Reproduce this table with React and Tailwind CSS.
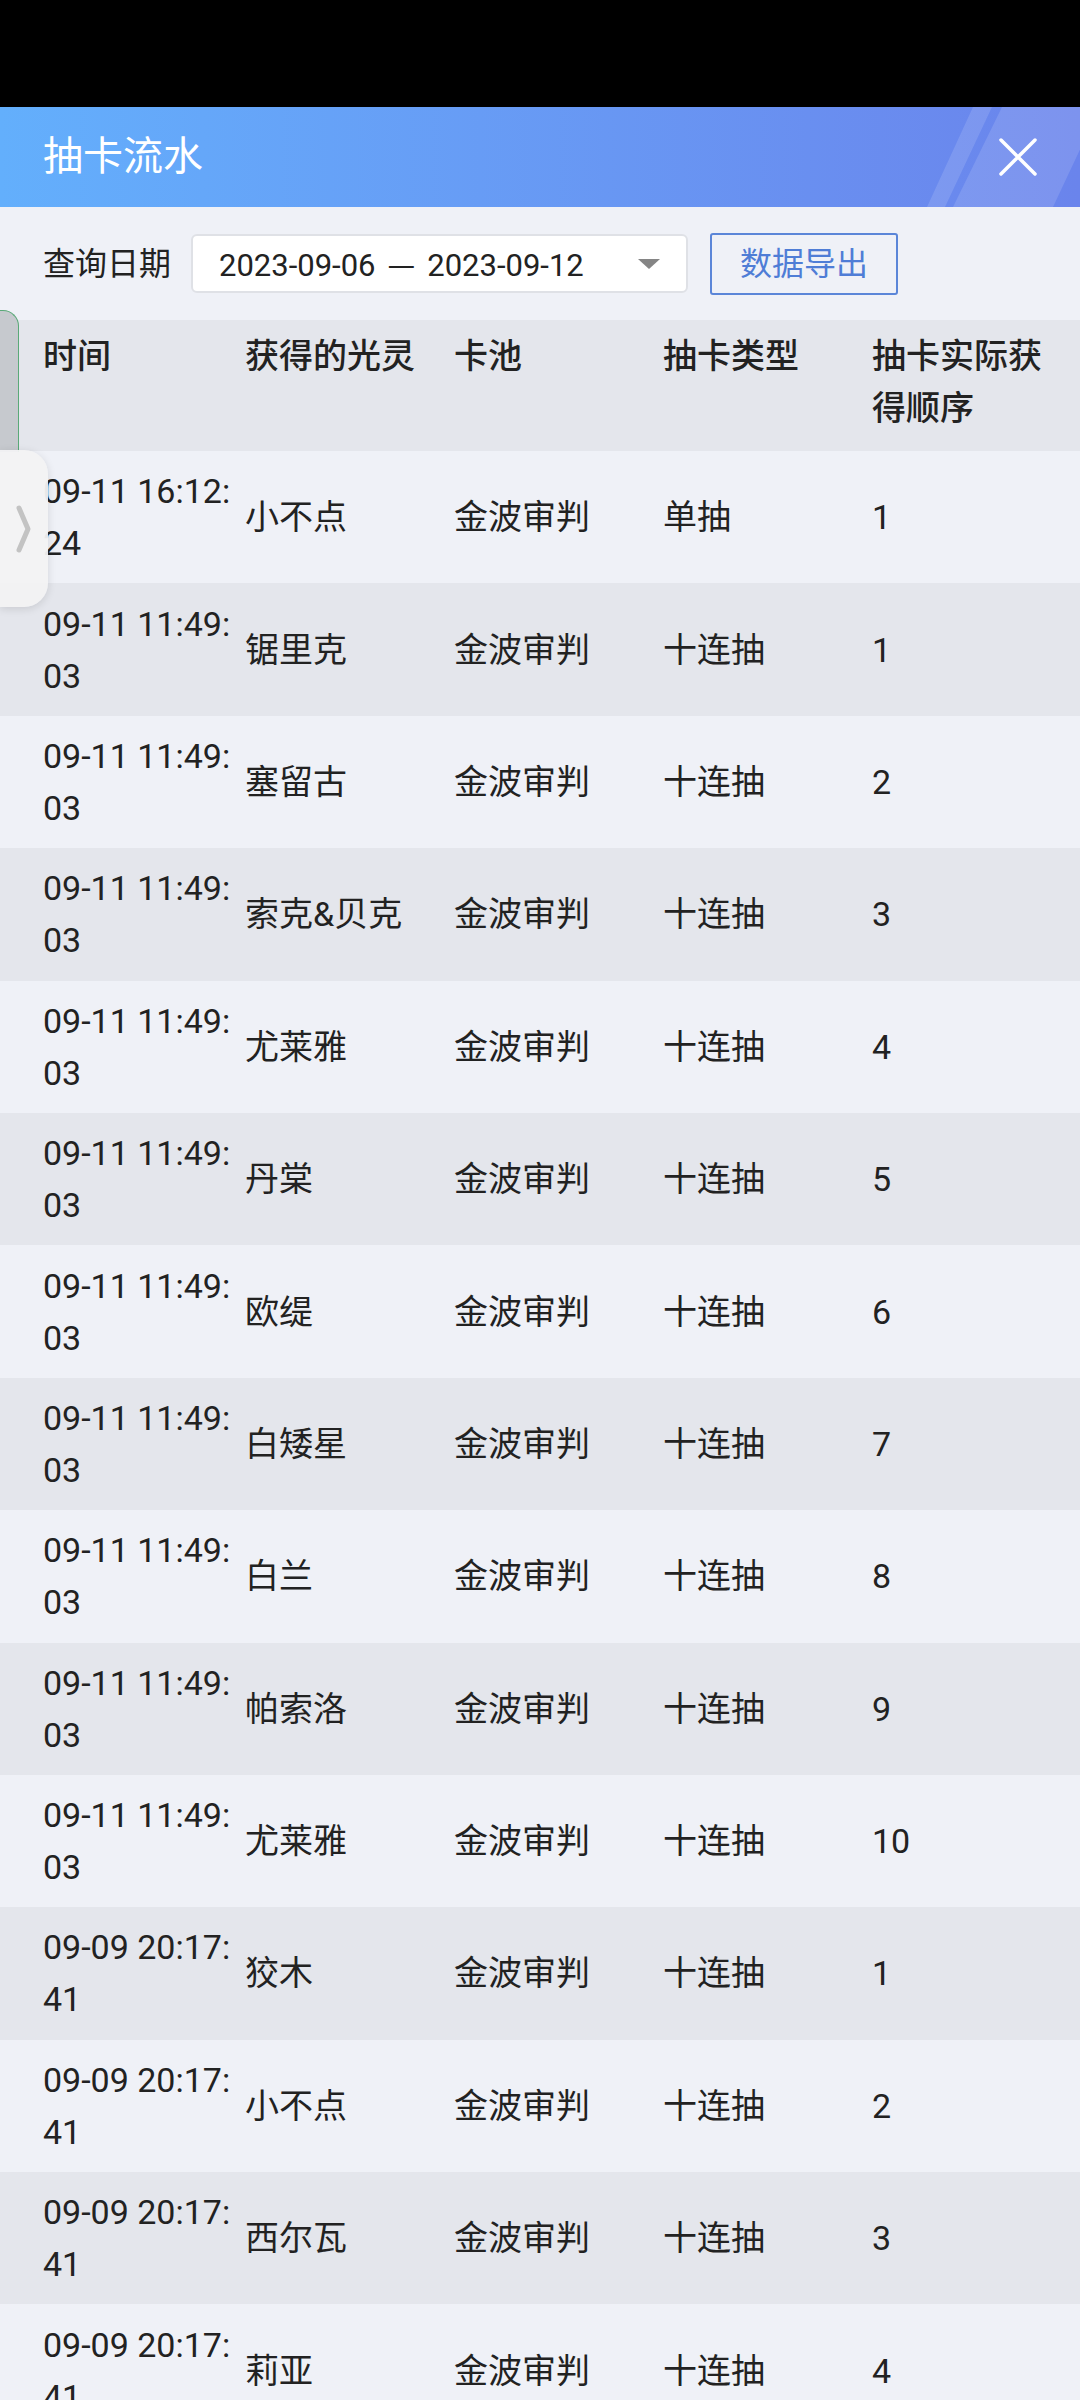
const rows = [
  ['09-11 16:12:', '24', '小不点', '金波审判', '单抽', '1'],
  ['09-11 11:49:', '03', '锯里克', '金波审判', '十连抽', '1'],
  ['09-11 11:49:', '03', '塞留古', '金波审判', '十连抽', '2'],
  ['09-11 11:49:', '03', '索克&贝克', '金波审判', '十连抽', '3'],
  ['09-11 11:49:', '03', '尤莱雅', '金波审判', '十连抽', '4'],
  ['09-11 11:49:', '03', '丹棠', '金波审判', '十连抽', '5'],
  ['09-11 11:49:', '03', '欧缇', '金波审判', '十连抽', '6'],
  ['09-11 11:49:', '03', '白矮星', '金波审判', '十连抽', '7'],
  ['09-11 11:49:', '03', '白兰', '金波审判', '十连抽', '8'],
  ['09-11 11:49:', '03', '帕索洛', '金波审判', '十连抽', '9'],
  ['09-11 11:49:', '03', '尤莱雅', '金波审判', '十连抽', '10'],
  ['09-09 20:17:', '41', '狡木', '金波审判', '十连抽', '1'],
  ['09-09 20:17:', '41', '小不点', '金波审判', '十连抽', '2'],
  ['09-09 20:17:', '41', '西尔瓦', '金波审判', '十连抽', '3'],
  ['09-09 20:17:', '41', '莉亚', '金波审判', '十连抽', '4'],
]

const font = { fontFamily: 'Roboto, "Noto Sans CJK SC", sans-serif' }

export default function App() {
  return (
    <div className="w-[1080px] h-[2400px] overflow-hidden bg-[#eff1f7] relative text-[#222]" style={font}>
      <div className="h-[107px] bg-black" />

      {/* title bar */}
      <div className="relative h-[100px] bg-linear-to-r from-[#63affc] to-[#6a84ec] flex items-center pl-[43px] overflow-hidden">
        <span className="text-[40px] text-white leading-none">抽卡流水</span>
        <svg className="absolute right-0 top-0 h-full w-[160px]" viewBox="0 0 160 100" preserveAspectRatio="none">
          <polygon points="53,0 72,0 25,100 7,100" fill="#ffffff" fillOpacity="0.13" />
          <polygon points="82,0 160,0 160,42.6 133,100 33,100" fill="#ffffff" fillOpacity="0.13" />
        </svg>
        <svg className="absolute left-[998px] top-[30px] w-[40px] h-[40px]" viewBox="0 0 40 40">
          <path d="M3 3 L37 37 M37 3 L3 37" stroke="#fff" strokeWidth="3.5" strokeLinecap="round" />
        </svg>
      </div>

      {/* query row */}
      <div className="h-[113px] flex items-center pl-[43px]">
        <span className="text-[32px] leading-none w-[148px]">查询日期</span>
        <div className="w-[497px] h-[59px] bg-white border-2 border-[#dfe1e6] rounded-[6px] flex items-center pl-[26px] pr-[26px] justify-between">
          <span className="text-[31px] text-[#222] leading-none whitespace-nowrap">
            2023-09-06<span className="mx-[12px]" style={{ fontFamily: '"Noto Sans CJK SC", sans-serif' }}>—</span>2023-09-12
          </span>
          <span className="w-0 h-0 border-l-[11px] border-r-[11px] border-t-[10px] border-l-transparent border-r-transparent border-t-[#858585]" />
        </div>
        <div className="ml-[22px] w-[188px] h-[62px] border-2 border-[#5b86d8] rounded-[3px] flex items-center justify-center text-[32px] text-[#4f7dd6] leading-none">
          数据导出
        </div>
      </div>

      {/* table header */}
      <div className="h-[131px] bg-[#e4e6ec] flex items-start pl-[43px] pt-[10px] text-[34px] leading-[52px] font-medium text-[#222]">
        <div className="w-[202px]">时间</div>
        <div className="w-[209px]">获得的光灵</div>
        <div className="w-[209px]">卡池</div>
        <div className="w-[209px]">抽卡类型</div>
        <div className="flex-1 pr-[24px]">抽卡实际获得顺序</div>
      </div>

      {rows.map((r, i) => (
        <div
          key={i}
          className={`h-[132.4px] flex items-center pl-[43px] text-[34px] leading-[52px] text-[#222] ${i % 2 === 0 ? 'bg-[#eff1f7]' : 'bg-[#e4e6ec]'}`}
        >
          <div className="w-[202px] whitespace-nowrap">{r[0]}<br />{r[1]}</div>
          <div className="w-[209px]">{r[2]}</div>
          <div className="w-[209px]">{r[3]}</div>
          <div className="w-[209px]">{r[4]}</div>
          <div className="flex-1">{r[5]}</div>
        </div>
      ))}

      {/* floating side handles */}
      <div className="absolute left-0 top-[310px] w-[19px] h-[142px] bg-[#c6c9ce] border-t border-r border-[#5aa978] rounded-tr-[16px]" />
      <div className="absolute left-0 top-[450px] w-[48px] h-[157px] bg-[#f2f2f3]/95 rounded-r-[24px] shadow-[0_2px_8px_rgba(0,0,0,0.12)] flex items-center justify-center">
        <svg width="16" height="48" viewBox="0 0 16 48">
          <path d="M3 3 L12 24 L3 45" stroke="#c3c3c3" strokeWidth="5" fill="none" strokeLinecap="round" strokeLinejoin="round" />
        </svg>
      </div>
    </div>
  )
}
